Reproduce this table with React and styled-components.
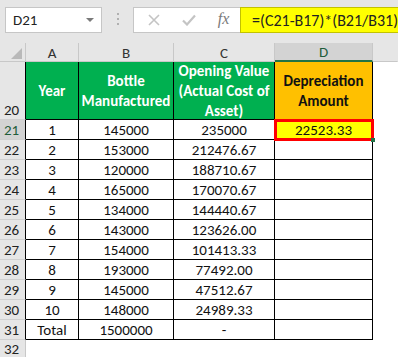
import React from 'react'
import styled, { createGlobalStyle } from 'styled-components'

const GlobalStyle = createGlobalStyle`
  html, body {
    margin: 0;
    padding: 0;
    background: #ffffff;
  }
  body {
    font-family: Carlito, Calibri, Lato, "Liberation Sans", sans-serif;
    color: #111;
  }
`

const rows = [
    ['1', '145000', '235000'],
    ['2', '153000', '212476.67'],
    ['3', '120000', '188710.67'],
    ['4', '165000', '170070.67'],
    ['5', '134000', '144440.67'],
    ['6', '143000', '123626.00'],
    ['7', '154000', '101413.33'],
    ['8', '193000', '77492.00'],
    ['9', '145000', '47512.67'],
    ['10', '148000', '24989.33'],
    ['Total', '1500000', '-'],
]

function FormulaBar() {
    return (
        <Bar>
            <NameBox>
                D21
                <Caret />
            </NameBox>
            <Grip>
                <i /><i /><i />
            </Grip>
            <Buttons>
                <svg width="12" height="12" viewBox="0 0 12 12">
                    <path d="M1 1 L11 11 M11 1 L1 11" stroke="#c4c4c4" strokeWidth="1.6" fill="none" />
                </svg>
                <svg width="14" height="12" viewBox="0 0 14 12">
                    <path d="M1 6.5 L5 10.5 L13 1.5" stroke="#c4c4c4" strokeWidth="2.2" fill="none" />
                </svg>
                <Fx>fx</Fx>
            </Buttons>
            <Formula>=(C21-B17)*(B21/B31)</Formula>
        </Bar>
    )
}

function App() {
    return (
        <>
            <GlobalStyle />
            <FormulaBar />
            <Sheet>
                <Corner><Triangle /></Corner>
                {['A', 'B', 'C', 'D'].map(c => (
                    <ColHead key={c} $active={c === 'D'}>{c}</ColHead>
                ))}
                <ColHead $last />

                <RowHead $boxed $bottom>20</RowHead>
                <Head>Year</Head>
                <Head>Bottle<br />Manufactured</Head>
                <Head $tall>Opening Value<br />(Actual Cost of<br />Asset)</Head>
                <Head $orange>Depreciation<br />Amount</Head>
                <Blank />

                {rows.map((r, i) => (
                    <React.Fragment key={i}>
                        <RowHead $boxed $active={i === 0}>{21 + i}</RowHead>
                        <Cell>{r[0]}</Cell>
                        <Cell>{r[1]}</Cell>
                        <Cell>{r[2]}</Cell>
                        {i === 0 ? <Selected>22523.33</Selected> : <Cell />}
                        <Blank />
                    </React.Fragment>
                ))}

                <RowHead>32</RowHead>
                <Blank /><Blank /><Blank /><Blank /><Blank />
            </Sheet>
        </>
    )
}

const Bar = styled.div`
    height: 43px;
    box-sizing: border-box;
    background: #e6e6e6;
    display: flex;
    align-items: flex-start;
    padding: 7px 0 0 5px;
`

const NameBox = styled.div`
    width: 102px;
    height: 26px;
    box-sizing: border-box;
    border: 1px solid #c6c6c6;
    background: #ffffff;
    display: flex;
    align-items: center;
    justify-content: space-between;
    padding: 0 7px 1px 7px;
    font-size: 15px;
    color: #222;
`

const Caret = styled.span`
    width: 0;
    height: 0;
    border-left: 4px solid transparent;
    border-right: 4px solid transparent;
    border-top: 4px solid #7a7a7a;
`

const Grip = styled.div`
    width: 3px;
    margin: 6px 13px 0 15px;
    display: flex;
    flex-direction: column;
    gap: 3px;
    i {
        width: 2px;
        height: 2px;
        background: #b0b0b0;
    }
`

const Buttons = styled.div`
    width: 113px;
    height: 26px;
    box-sizing: border-box;
    border: 1px solid #c6c6c6;
    border-right: none;
    background: #ffffff;
    display: flex;
    align-items: center;
    gap: 22px;
    padding-left: 14px;
`

const Fx = styled.span`
    font-family: "Liberation Serif", serif;
    font-style: italic;
    font-size: 16px;
    color: #7a7a7a;
    margin-top: -2px;
`

const Formula = styled.div`
    flex: 1;
    height: 26px;
    box-sizing: border-box;
    border: 1px solid #c2c200;
    border-right: none;
    background: #ffff00;
    display: flex;
    align-items: center;
    padding-left: 11px;
    font-size: 16px;
    color: #222;
    white-space: nowrap;
`

const Sheet = styled.div`
    display: grid;
    grid-template-columns: 26px 53px 95px 101px 98px 1fr;
    grid-template-rows: 19px 58px repeat(11, 20px) 18px;
    background: #ffffff;
    font-size: 15px;
`

const Corner = styled.div`
    background: #e6e6e6;
    border-right: 1px solid #c8c8c8;
    border-bottom: 1px solid #c8c8c8;
    position: relative;
`

const Triangle = styled.span`
    position: absolute;
    right: 3px;
    bottom: 2px;
    width: 0;
    height: 0;
    border-left: 11px solid transparent;
    border-bottom: 11px solid #b9b9b9;
`

const ColHead = styled.div`
    background: ${p => (p.$active ? '#d3d3d3' : '#e6e6e6')};
    border-right: 1px solid ${p => (p.$last ? 'transparent' : '#c8c8c8')};
    border-bottom: ${p => (p.$active ? '2px solid #217346' : '1px solid #c8c8c8')};
    color: ${p => (p.$active ? '#1e5c3a' : '#333')};
    display: flex;
    align-items: center;
    justify-content: center;
    padding-top: 1px;
`

const RowHead = styled.div`
    background: ${p => (p.$active ? '#d3d3d3' : '#e6e6e6')};
    border-right: 1px solid ${p => (p.$boxed ? '#000' : '#c8c8c8')};
    border-bottom: 1px solid #d0d0d0;
    color: ${p => (p.$active ? '#1e5c3a' : '#222')};
    display: flex;
    align-items: ${p => (p.$bottom ? 'flex-end' : 'center')};
    justify-content: center;
    padding-right: 2px;
    line-height: 18px;
`

const Head = styled.div`
    background: ${p => (p.$orange ? '#ffc000' : '#00b050')};
    color: ${p => (p.$orange ? '#111' : '#ffffff')};
    font-weight: 700;
    border-right: 1px solid #000;
    border-bottom: 1px solid #000;
    display: flex;
    align-items: center;
    justify-content: center;
    text-align: center;
    line-height: 20px;
    overflow: hidden;
    white-space: nowrap;
    padding-top: ${p => (p.$tall ? '1px' : '0')};
`

const Cell = styled.div`
    border-right: 1px solid #000;
    border-bottom: 1px solid #000;
    display: flex;
    align-items: center;
    justify-content: center;
    white-space: nowrap;
    overflow: hidden;
`

const Selected = styled(Cell)`
    background: #ffff00;
    position: relative;
    overflow: visible;
    outline: 3px solid #ff0000;
    outline-offset: -2px;
    &::after {
        content: '';
        position: absolute;
        right: -3px;
        bottom: -3px;
        width: 4px;
        height: 4px;
        background: #217346;
    }
`

const Blank = styled.div`
    background: #ffffff;
`

export default App
